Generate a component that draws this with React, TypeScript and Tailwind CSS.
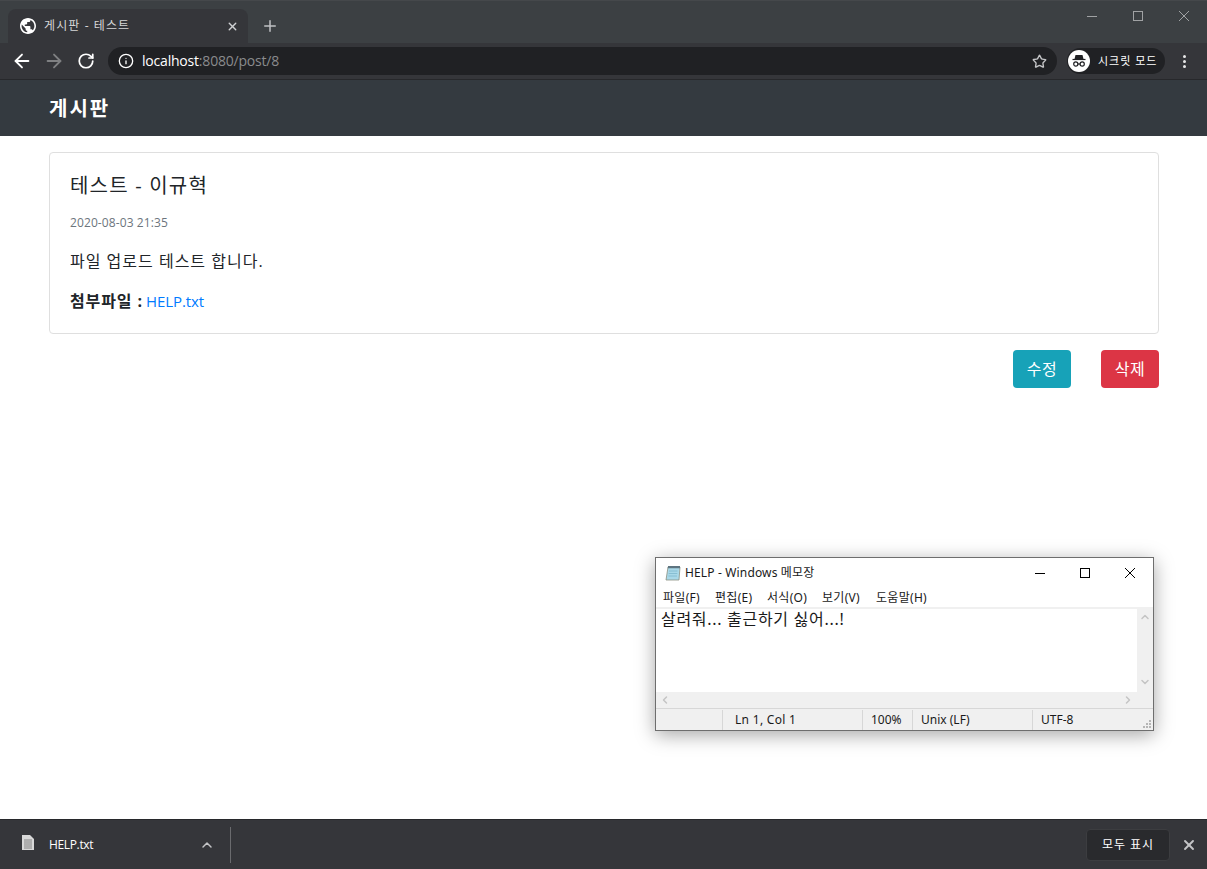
import { Plus, X, ArrowLeft, ArrowRight, RotateCw, Info, Star, ChevronUp } from 'lucide-react';

const fonte = "font-['Open_Sans','Noto_Sans_CJK_KR',sans-serif]";
const fonteWin = "font-['Noto_Sans','Noto_Sans_CJK_KR',sans-serif]";

// botões de janela desenhados em 10px, como no Windows
function ControlesJanela({ gap, traco }: { gap: string; traco: string }) {
  return (
    <div className={`flex items-center ${gap} ${traco}`}>
      <svg width="10" height="10" viewBox="0 0 10 10" stroke="currentColor" strokeWidth="1" fill="none">
        <path d="M0 5.5h10" />
      </svg>
      <svg width="10" height="10" viewBox="0 0 10 10" stroke="currentColor" strokeWidth="1" fill="none">
        <rect x="0.5" y="0.5" width="9" height="9" />
      </svg>
      <svg width="10" height="10" viewBox="0 0 10 10" stroke="currentColor" strokeWidth="1" fill="none">
        <path d="M0 0l10 10M10 0L0 10" />
      </svg>
    </div>
  );
}

function BarraChrome() {
  return (
    <div className={`${fonte} shrink-0`}>
      {/* abas */}
      <div className="h-[43px] bg-[#3c4043] border-t border-[#45484b] flex items-end relative">
        <div className="ml-2 w-[240px] h-[34px] bg-[#35363a] rounded-t-lg flex items-center pl-[12px] pr-[9px]">
          <svg width="16" height="16" viewBox="2 2 20 20" fill="#ffffff">
            <path d="M12 2C6.48 2 2 6.48 2 12s4.48 10 10 10 10-4.48 10-10S17.52 2 12 2zm-1 17.93c-3.95-.49-7-3.85-7-7.93 0-.62.08-1.21.21-1.79L9 15v1c0 1.1.9 2 2 2v1.93zm6.9-2.54c-.26-.81-1-1.39-1.9-1.39h-1v-3c0-.55-.45-1-1-1H8v-2h2c.55 0 1-.45 1-1V7h2c1.1 0 2-.9 2-2v-.41c2.93 1.19 5 4.06 5 7.41 0 2.08-.8 3.97-2.1 5.39z" />
          </svg>
          <span className="ml-[8px] text-xs tracking-[1.1px] text-[#d5d6d8] flex-1">게시판 - 테스트</span>
          <X size={13} className="text-[#d0d1d3]" strokeWidth={2.5} />
        </div>
        <Plus size={18} className="ml-[13px] mb-[8px] text-[#bfc1c3]" strokeWidth={2} />
        <div className="absolute top-0 right-0 flex items-center h-[29px] pr-[18px]">
          <ControlesJanela gap="gap-[36px]" traco="text-[#a0a2a4]" />
        </div>
      </div>
      {/* endereço */}
      <div className="h-[37px] bg-[#35363a] border-b border-[#27282b] flex items-center pl-[11px]">
        <ArrowLeft size={22} className="text-white" strokeWidth={2} />
        <ArrowRight size={22} className="ml-[10px] text-[#7f8082]" strokeWidth={2} />
        <RotateCw size={18} className="ml-[12px] text-white" strokeWidth={2.3} />
        <div className="ml-[13px] w-[949px] h-[28px] bg-[#202124] rounded-full flex items-center pl-[10px] pr-[10px]">
          <Info size={16} className="text-white" strokeWidth={2} />
          <span className="ml-[8px] text-sm tracking-[-0.2px] text-white">localhost<span className="text-[#8a8b8d]">:8080/post/8</span></span>
          <Star size={15} className="ml-auto text-[#c4c5c7]" strokeWidth={2.2} />
        </div>
        <div className="ml-[10px] w-[98px] h-[26px] bg-[#202124] rounded-full flex items-center pl-[1px]">
          <div className="w-[22px] h-[22px] rounded-full bg-white flex items-center justify-center">
            <svg width="16" height="14" viewBox="0 0 16 14" fill="none">
              <path d="M4.5 1h7l1 4h-9z" fill="#202124" />
              <path d="M1.5 5.5h13" stroke="#202124" strokeWidth="1.2" />
              <circle cx="4.8" cy="10" r="2.1" stroke="#202124" strokeWidth="1.2" />
              <circle cx="11.2" cy="10" r="2.1" stroke="#202124" strokeWidth="1.2" />
              <path d="M6.9 10h2.2" stroke="#202124" strokeWidth="1.2" />
            </svg>
          </div>
          <span className="ml-[8px] text-[11px] tracking-[1px] text-white whitespace-nowrap">시크릿 모드</span>
        </div>
        <div className="ml-[18px] flex flex-col gap-[2px]">
          <span className="w-[3px] h-[3px] rounded-full bg-[#e8e8e8]" />
          <span className="w-[3px] h-[3px] rounded-full bg-[#e8e8e8]" />
          <span className="w-[3px] h-[3px] rounded-full bg-[#e8e8e8]" />
        </div>
      </div>
    </div>
  );
}

function Post() {
  return (
    <div className="pl-[49px] pr-[48px] pt-4 flex-1">
      <div className="border border-[#dfdfdf] rounded pl-[20px] pr-[21px] h-[182px] pt-[21px]">
        <h5 className="text-[20px] leading-[24px] tracking-[1.2px] text-[#212529]">테스트 - 이규혁</h5>
        <p className="mt-[16px] text-xs leading-[18px] tracking-[0.1px] text-[#6c757d]">2020-08-03 21:35</p>
        <p className="mt-[17px] text-base leading-6 tracking-[1px] text-[#212529]">파일 업로드 테스트 합니다.</p>
        <p className="mt-[16px] text-base leading-6 text-[#212529]">
          <strong className="font-bold tracking-[0.9px]">첨부파일 : </strong>
          <span className="-ml-[2px] text-[#007bff] text-[15px] tracking-[-0.1px]">HELP.txt</span>
        </p>
      </div>
      <div className="mt-4 flex justify-end gap-[30px]">
        <button className="w-[58px] h-[38px] rounded bg-[#17a2b8] text-white text-base tracking-[0.5px]">수정</button>
        <button className="w-[58px] h-[38px] rounded bg-[#dc3545] text-white text-base tracking-[0.5px]">삭제</button>
      </div>
    </div>
  );
}

function Notepad() {
  const menus = [
    ['파일(F)', 'w-[52px]'],
    ['편집(E)', 'w-[52px]'],
    ['서식(O)', 'w-[55px]'],
    ['보기(V)', 'w-[54px]'],
    ['도움말(H)', 'w-[60px]'],
  ];
  return (
    <div className={`${fonteWin} absolute left-[655px] top-[557px] w-[499px] h-[174px] bg-white border border-[#6e6e6e] shadow-[0_4px_18px_rgba(0,0,0,0.35)] flex flex-col text-[#1a1a1a]`}>
      <div className="h-[29px] flex items-center pl-[9px] shrink-0">
        <svg width="16" height="16" viewBox="0 0 16 16">
          <path d="M3 2h12l-1 13H1z" fill="#a9d8e8" stroke="#8a8f80" strokeWidth="0.8" />
          <path d="M3 1h12v2.2H2.8z" fill="#5d7480" />
          <path d="M4 6h8.5M3.7 8.5h8.6M3.4 11h8.6" stroke="#7fb7cc" strokeWidth="0.8" />
        </svg>
        <span className="ml-[4px] text-xs tracking-[0.15px]">HELP - Windows 메모장</span>
        <div className="ml-auto pr-[18px]">
          <ControlesJanela gap="gap-[35px]" traco="text-black" />
        </div>
      </div>
      <div className="h-[20px] pt-[1px] flex items-center pl-[7px] text-xs tracking-[0.3px] shrink-0">
        {menus.map(([nome, w]) => (
          <span key={nome} className={`${w} whitespace-nowrap`}>{nome}</span>
        ))}
      </div>
      <div className="flex-1 bg-[#f0f0f0] pt-[2px] flex flex-col min-h-0">
        <div className="flex flex-1 min-h-0">
          <div className="flex-1 bg-white pl-[5px] text-base leading-[20px] tracking-[0.7px]">살려줘... 출근하기 싫어...!</div>
          <div className="w-[16px] flex flex-col items-center justify-between pt-[2px] pb-[4px] text-[#c4c4c4]">
            <ChevronUp size={12} strokeWidth={3} />
            <ChevronUp size={12} strokeWidth={3} className="rotate-180" />
          </div>
        </div>
        <div className="h-[16px] flex items-center justify-between pl-[3px] pr-[19px] text-[#c4c4c4] shrink-0">
          <ChevronUp size={12} strokeWidth={3} className="-rotate-90" />
          <ChevronUp size={12} strokeWidth={3} className="rotate-90" />
        </div>
        <div className="h-[22px] border-t border-[#d7d7d7] flex items-center text-xs shrink-0 relative">
          <span className="w-[66px]" />
          <span className="w-[140px] border-l border-[#d7d7d7] pl-[12px] leading-[20px] tracking-[0.3px]">Ln 1, Col 1</span>
          <span className="w-[50px] border-l border-[#d7d7d7] pl-[8px] leading-[20px]">100%</span>
          <span className="w-[120px] border-l border-[#d7d7d7] pl-[8px] leading-[20px]">Unix (LF)</span>
          <span className="flex-1 border-l border-[#d7d7d7] pl-[8px] leading-[20px]">UTF-8</span>
          <svg className="absolute right-[1px] bottom-[1px]" width="9" height="9" viewBox="0 0 9 9" fill="#b5b5b5">
            <rect x="6" y="0" width="2" height="2" />
            <rect x="3" y="3" width="2" height="2" />
            <rect x="6" y="3" width="2" height="2" />
            <rect x="0" y="6" width="2" height="2" />
            <rect x="3" y="6" width="2" height="2" />
            <rect x="6" y="6" width="2" height="2" />
          </svg>
        </div>
      </div>
    </div>
  );
}

function BarraDownload() {
  return (
    <div className={`${fonte} h-[50px] shrink-0 bg-[#35363a] border-t border-[#27282b] flex items-center relative`}>
      <svg className="ml-[22px] -mt-[4px]" width="12" height="15" viewBox="0 0 12 15">
        <path d="M0 0h8l4 4v11H0z" fill="#d8d8d8" />
        <path d="M2 5h8M2 7h8M2 9h8M2 11h8M2 13h8" stroke="#707070" strokeWidth="0.8" />
      </svg>
      <span className="ml-[15px] text-xs tracking-[-0.35px] text-white w-[150px]">HELP.txt</span>
      <ChevronUp size={16} className="text-[#c4c5c7]" strokeWidth={2.2} />
      <span className="ml-[15px] w-px h-[36px] bg-[#6a6b6e]" />
      <button className="ml-auto w-[84px] h-[32px] rounded bg-[#292a2d] border border-[#3c3d40] text-xs tracking-[0.9px] text-white">모두 표시</button>
      <X size={16} className="ml-[11px] mr-[10px] text-[#c4c5c7]" strokeWidth={2.8} />
    </div>
  );
}

export default function App() {
  return (
    <div className="h-screen w-full bg-white flex flex-col overflow-hidden relative">
      <BarraChrome />
      <nav className={`${fonte} h-[56px] shrink-0 bg-[#343a40] flex items-center px-[49px] pt-[2px]`}>
        <span className="text-[20px] font-bold tracking-[2px] text-white">게시판</span>
      </nav>
      <div className={`${fonte} flex-1 flex flex-col`}>
        <Post />
      </div>
      <Notepad />
      <BarraDownload />
    </div>
  );
}
